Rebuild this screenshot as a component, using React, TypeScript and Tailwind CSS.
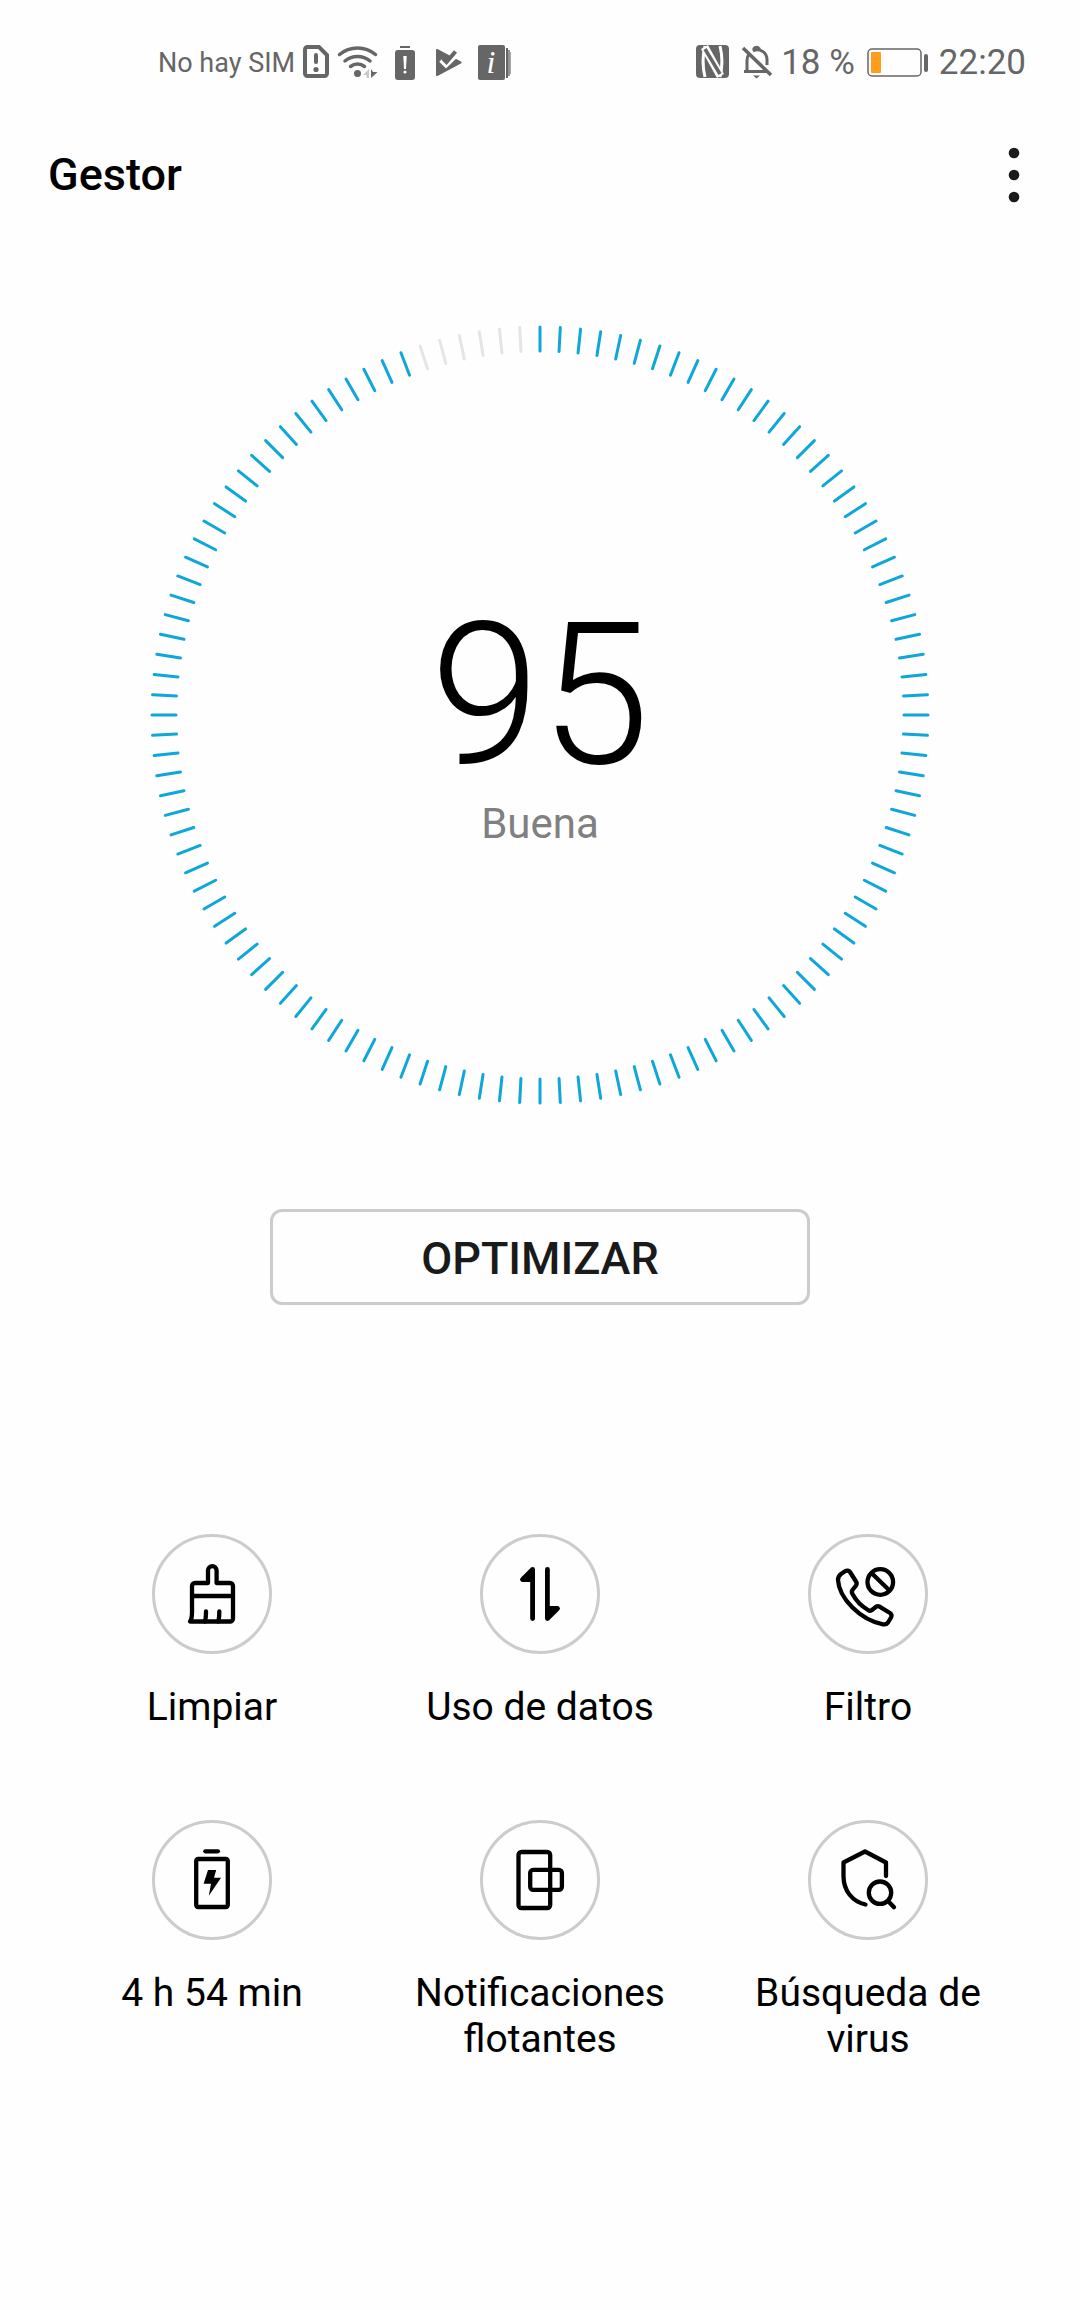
import type { ReactNode } from "react";

const TICKS = 120;
const SCORE = 95;

const ticks = Array.from({ length: TICKS }, (_, i) => ({
  angle: (i * 360) / TICKS,
  active: i < (TICKS * SCORE) / 100,
}));

/* ── Status bar icons ─────────────────────────────────────────── */

function SimIcon() {
  return (
    <svg className="ml-2 w-[26px] h-[36px]" viewBox="0 0 26 36" fill="none" stroke="currentColor" strokeWidth={4}>
      <path d="M4.500 2H16l8 8v18.500a2.500 2.500 0 0 1-2.500 2.500h-17A2.500 2.500 0 0 1 2 28.500v-24A2.500 2.500 0 0 1 4.500 2z" />
      <path d="M13 10v7" strokeLinecap="round" />
      <circle cx="13" cy="24.500" r="2.600" fill="currentColor" stroke="none" />
    </svg>
  );
}

function WifiIcon() {
  return (
    <svg className="ml-2 w-[42px] h-[36px]" viewBox="0 0 42 36" fill="none" stroke="currentColor" strokeWidth={3.5}>
      <path d="M2.500 9.500a28 28 0 0 1 36 0" strokeLinecap="round" />
      <path d="M8 16a20 20 0 0 1 25 0" strokeLinecap="round" />
      <path d="M13.500 21.500a11.500 11.500 0 0 1 14 0" strokeLinecap="round" />
      <circle cx="20.500" cy="28.500" r="3.500" fill="currentColor" stroke="none" />
      <path d="M32 24v9h-2.500v-3H26z" fill="#c8c8c8" stroke="none" />
      <path d="M34 33v-9l2 3h4.500z" fill="currentColor" stroke="none" />
    </svg>
  );
}

function BatteryAlertIcon() {
  return (
    <svg className="ml-4 w-[20px] h-[36px]" viewBox="0 0 20 36" fill="currentColor">
      <rect x="5" y="1" width="10" height="2" />
      <rect x="0" y="5" width="20" height="30" rx="3" />
      <path d="M8.300 11h3.400l-.7 13H9z" fill="#fff" />
      <circle cx="10" cy="27" r="1.600" fill="#fff" />
    </svg>
  );
}

function PlayCheckIcon() {
  return (
    <svg className="ml-5 w-[27px] h-[36px]" viewBox="0 0 27 36" fill="none">
      <path d="M2 5l23.500 12.500L2 30z" fill="currentColor" stroke="currentColor" strokeWidth={2} strokeLinejoin="round" />
      <path d="M5.500 15.500l5.500 5.500L25 7.500" stroke="#fefefe" strokeWidth={3.500} />
      <path d="M8 13.500l3.500 3.500 9-10.500" stroke="currentColor" strokeWidth={4} />
    </svg>
  );
}

function InfoPagesIcon() {
  return (
    <svg className="ml-4 w-[34px] h-[36px]" viewBox="0 0 34 36" fill="currentColor">
      <rect x="0" y="0" width="27" height="35" rx="2" />
      <rect x="28" y="3" width="2" height="30" />
      <rect x="30" y="5" width="2" height="26" opacity=".7" />
      <rect x="32" y="7" width="1" height="22" opacity=".6" />
      <text x="13" y="28" fontSize="32" textAnchor="middle" fill="#fff" className="font-['Liberation_Serif',serif] italic">
        i
      </text>
    </svg>
  );
}

function NfcIcon() {
  return (
    <svg className="w-[33px] h-[36px]" viewBox="0 0 33 36" fill="none">
      <rect width="33" height="33" rx="4" fill="currentColor" />
      <g stroke="#fff" strokeWidth={3}>
        <path d="M9 1C6.500 11 6.500 22 9 32" />
        <path d="M24 32C26.500 22 26.500 11 24 1" />
        <path d="M8.500 2L24.500 31" strokeWidth={8} />
      </g>
      <path d="M9 4l15 25" stroke="currentColor" strokeWidth={3.500} />
    </svg>
  );
}

function BellOffIcon() {
  return (
    <svg className="ml-3 w-[32px] h-[36px]" viewBox="0 0 32 36" fill="none" stroke="currentColor" strokeWidth={3}>
      <path d="M6 26V15c0-2 .6-4 2-5.500M12 6c5-3 14 0 14 9v5M3 26.500h23" />
      <path d="M13 5V3.500a3 3 0 0 1 5 0V6" />
      <path d="M2 3l28 27" strokeWidth={3.500} />
      <path d="M12 30.500h7l-3.500 3z" fill="currentColor" stroke="none" />
    </svg>
  );
}

function BatteryIcon() {
  return (
    <svg className="ml-3 w-[62px] h-[36px]" viewBox="0 0 62 36" fill="none">
      <rect x="1" y="4" width="53" height="27" rx="4" stroke="currentColor" strokeWidth={1.500} />
      <rect x="4" y="7" width="10" height="21" rx="1" fill="#ff9d1c" />
      <rect x="57" y="9" width="4" height="18" rx="2" fill="currentColor" />
    </svg>
  );
}

/* ── Action icons ─────────────────────────────────────────────── */

const iconProps = {
  viewBox: "0 0 120 120",
  fill: "none",
  stroke: "currentColor",
  strokeWidth: 4.3,
  strokeLinecap: "round",
  strokeLinejoin: "round",
  className: "size-[120px] shrink-0",
} as const;

function BrushIcon() {
  return (
    <svg {...iconProps}>
      <path d="M38 87.500c1.500-2 2-5 2-9V52a3 3 0 0 1 3-3h13V36.500a4.300 4.300 0 0 1 8.600 0V49H78a3 3 0 0 1 3 3v32.500a3 3 0 0 1-3 3z" />
      <path d="M40 62h41M54 77.500c0 5-.3 8-1.200 10M67.300 77.500c0 5-.3 8-1.200 10" />
    </svg>
  );
}

function DataUsageIcon() {
  return (
    <svg {...iconProps} fill="currentColor" strokeWidth={4.8}>
      <path d="M52.600 35.500v49M52.600 35.500L42.500 45.500h10.100z" />
      <path d="M67.400 35.500v49M67.400 84.500L77.500 74.500H67.400z" />
    </svg>
  );
}

function CallFilterIcon() {
  return (
    <svg {...iconProps}>
      <path d="M30 46c0-3 1-4.500 3-6l4-2.700c2-1.300 4-.8 5 .7l6 9.500c1 1.500 1 2.500 0 4L44.500 56c-1 1.500-1 2.500 0 4C48 66.500 54 72.500 60 76c1.500 1 3 1 4 0l4-3.200c1-.8 2.500-.8 3.500-.2L82 79c1.500 1 2 2.500 1 4.500L80 88.500c-1 1.500-3 2.100-5 1.800C52 86 31 64 30 46z" />
      <circle cx="72.300" cy="48" r="12.800" />
      <path d="M64 39.500l17.500 17" />
    </svg>
  );
}

function BatteryTimeIcon() {
  return (
    <svg {...iconProps}>
      <path d="M53.300 31.300h12.600" />
      <rect x="44.200" y="39" width="31.600" height="48" rx="2" />
      <path d="M56 50h8.200L62 57.700h7L56.800 75.700 59 63.700h-7.400z" fill="currentColor" stroke="none" />
    </svg>
  );
}

function FloatingIcon() {
  return (
    <svg {...iconProps}>
      <rect x="38.500" y="32" width="31.700" height="56" rx="3" />
      <rect x="50.200" y="49.800" width="31.700" height="20" rx="3" />
    </svg>
  );
}

function VirusScanIcon() {
  return (
    <svg {...iconProps}>
      <path d="M78 56V42.500L57 31.500 35.500 42.500V56c0 15 9 25.500 22 28.500" />
      <circle cx="72" cy="72.700" r="11.200" />
      <path d="M80.500 81.500l5.500 5.800" />
    </svg>
  );
}

const actions: { label: string; icon: ReactNode }[] = [
  { label: "Limpiar", icon: <BrushIcon /> },
  { label: "Uso de datos", icon: <DataUsageIcon /> },
  { label: "Filtro", icon: <CallFilterIcon /> },
  { label: "4 h 54 min", icon: <BatteryTimeIcon /> },
  { label: "Notificaciones flotantes", icon: <FloatingIcon /> },
  { label: "Búsqueda de virus", icon: <VirusScanIcon /> },
];

function StatusBar() {
  return (
    <div className="flex h-[126px] items-center justify-between pl-[158px] pr-[54px] text-[#666666]">
      <div className="flex items-center">
        <span className="text-[27px]">No hay SIM</span>
        <SimIcon />
        <WifiIcon />
        <BatteryAlertIcon />
        <PlayCheckIcon />
        <InfoPagesIcon />
      </div>
      <div className="flex items-center text-[35px]">
        <NfcIcon />
        <BellOffIcon />
        <span className="ml-2">18 %</span>
        <BatteryIcon />
        <span className="ml-2.5">22:20</span>
      </div>
    </div>
  );
}

function ScoreRing() {
  return (
    <div className="mx-auto grid w-[780px] max-w-full place-items-center">
      <svg className="col-start-1 row-start-1 w-full" viewBox="0 0 780 780" strokeWidth={3} strokeLinecap="round">
        {ticks.map((tick) => (
          <line
            key={tick.angle}
            x1="390"
            x2="390"
            y1="2"
            y2="26"
            stroke={tick.active ? "#0fa6d9" : "#e5e5e5"}
            transform={`rotate(${tick.angle} 390 390)`}
          />
        ))}
      </svg>
      <div className="col-start-1 row-start-1 pt-[14px] text-center">
        <p className="text-[198px] leading-[200px] font-light text-black">{SCORE}</p>
        <p className="mt-1 text-[42px] leading-[50px] text-[#808080]">Buena</p>
      </div>
    </div>
  );
}

export default function App() {
  return (
    <div className="min-h-screen bg-[#fefefe] font-[Roboto,sans-serif] text-black">
      <StatusBar />

      <header className="flex h-[98px] items-center justify-between pl-12 pr-[42px]">
        <h1 className="text-[45px] font-medium">Gestor</h1>
        <button type="button" aria-label="Más opciones" className="flex w-[48px] justify-center">
          <svg className="h-[56px] w-[12px]" viewBox="0 0 12 56" fill="#1a1a1a">
            <circle cx="6" cy="6" r="5.300" />
            <circle cx="6" cy="28" r="5.300" />
            <circle cx="6" cy="50" r="5.300" />
          </svg>
        </button>
      </header>

      <main className="pt-[101px] pb-24">
        <ScoreRing />

        <button
          type="button"
          className="mx-auto mt-[104px] block h-[96px] w-1/2 rounded-xl border-3 border-[#cccccc] pt-0.5 text-[45px] leading-none font-medium text-[#1a1a1a]"
        >
          OPTIMIZAR
        </button>

        <div className="mt-[229px] grid grid-cols-3 gap-y-[90px] px-12">
          {actions.map((action) => (
            <button key={action.label} type="button" className="flex flex-col items-center">
              <span className="flex size-[120px] items-center justify-center rounded-full border-3 border-[#cccccc]">
                {action.icon}
              </span>
              <span className="mt-[30px] max-w-[280px] text-[39px] leading-[46px]">{action.label}</span>
            </button>
          ))}
        </div>
      </main>
    </div>
  );
}
